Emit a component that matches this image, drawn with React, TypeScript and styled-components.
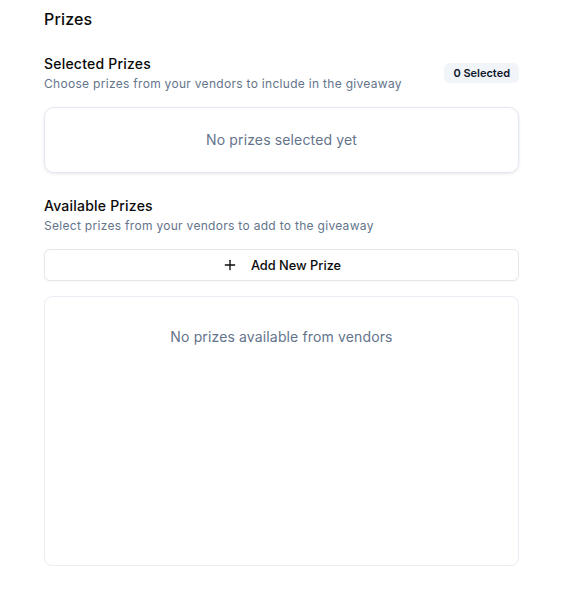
import styled, { createGlobalStyle } from 'styled-components'

const GlobalStyle = createGlobalStyle`
    body {
        margin: 0;
        background: #ffffff;
        font-family: Inter, 'Liberation Sans', sans-serif;
        color: #0f172a;
    }
`

export default function App() {
    return (
        <>
            <GlobalStyle />
            <Page>
                <Title>Prizes</Title>

                <Section>
                    <SectionHeader>
                        <div>
                            <Heading>Selected Prizes</Heading>
                            <Subtitle>Choose prizes from your vendors to include in the giveaway</Subtitle>
                        </div>
                        <Badge>0 Selected</Badge>
                    </SectionHeader>
                    <EmptyBox $shadow $height={66}>
                        <EmptyText>No prizes selected yet</EmptyText>
                    </EmptyBox>
                </Section>

                <Section>
                    <SectionHeader>
                        <div>
                            <Heading>Available Prizes</Heading>
                            <Subtitle>Select prizes from your vendors to add to the giveaway</Subtitle>
                        </div>
                    </SectionHeader>
                    <AddButton>
                        <svg width="16" height="16" viewBox="0 0 24 24" fill="none" stroke="currentColor" strokeWidth="2" strokeLinecap="round">
                            <path d="M5 12h14" />
                            <path d="M12 5v14" />
                        </svg>
                        Add New Prize
                    </AddButton>
                    <EmptyBox $height={270} $top>
                        <EmptyText>No prizes available from vendors</EmptyText>
                    </EmptyBox>
                </Section>
            </Page>
        </>
    )
}

const Page = styled.div`
    width: 475px;
    padding: 7px 0 40px 44px;
    display: flex;
    flex-direction: column;
`
const Title = styled.h1`
    margin: 0;
    font-size: 16px;
    line-height: 24px;
    font-weight: 500;
    letter-spacing: 0.01em;
    color: #0a0a0a;
`
const Section = styled.div`
    margin-top: 23px;
    display: flex;
    flex-direction: column;
    gap: 15px;
`
const SectionHeader = styled.div`
    display: flex;
    align-items: center;
    justify-content: space-between;
`
const Heading = styled.h2`
    margin: 0;
    font-size: 14px;
    line-height: 20px;
    font-weight: 500;
    letter-spacing: 0.015em;
    color: #0a0a0a;
`
const Subtitle = styled.p`
    margin: 2px 0 0;
    font-size: 12px;
    line-height: 16px;
    letter-spacing: 0.025em;
    color: #64748b;
`
const Badge = styled.span`
    height: 20px;
    padding: 0 9px;
    display: flex;
    align-items: center;
    border-radius: 6px;
    background: #f1f5f9;
    font-size: 11px;
    font-weight: 600;
    color: #0f172a;
`
const EmptyBox = styled.div<{ $shadow?: boolean; $height: number; $top?: boolean }>`
    box-sizing: border-box;
    height: ${(p) => p.$height}px;
    border: 1px solid ${(p) => (p.$shadow ? '#e2e8f0' : '#e8edf3')};
    border-radius: ${(p) => (p.$shadow ? '10px' : '8px')};
    box-shadow: ${(p) => (p.$shadow ? '0 1px 3px rgba(15, 23, 42, 0.1)' : 'none')};
    display: flex;
    justify-content: center;
    align-items: ${(p) => (p.$top ? 'flex-start' : 'center')};
    padding-top: ${(p) => (p.$top ? '30px' : '0')};
`
const EmptyText = styled.span`
    font-size: 14px;
    line-height: 20px;
    letter-spacing: 0.01em;
    color: #64748b;
`
const AddButton = styled.button`
    height: 32px;
    display: flex;
    align-items: center;
    justify-content: center;
    gap: 13px;
    background: #ffffff;
    border: 1px solid #e5e7eb;
    border-radius: 6px;
    box-shadow: 0 1px 2px rgba(15, 23, 42, 0.04);
    font-family: Inter, 'Liberation Sans', sans-serif;
    font-size: 12.8px;
    font-weight: 500;
    color: #0a0a0a;
`
